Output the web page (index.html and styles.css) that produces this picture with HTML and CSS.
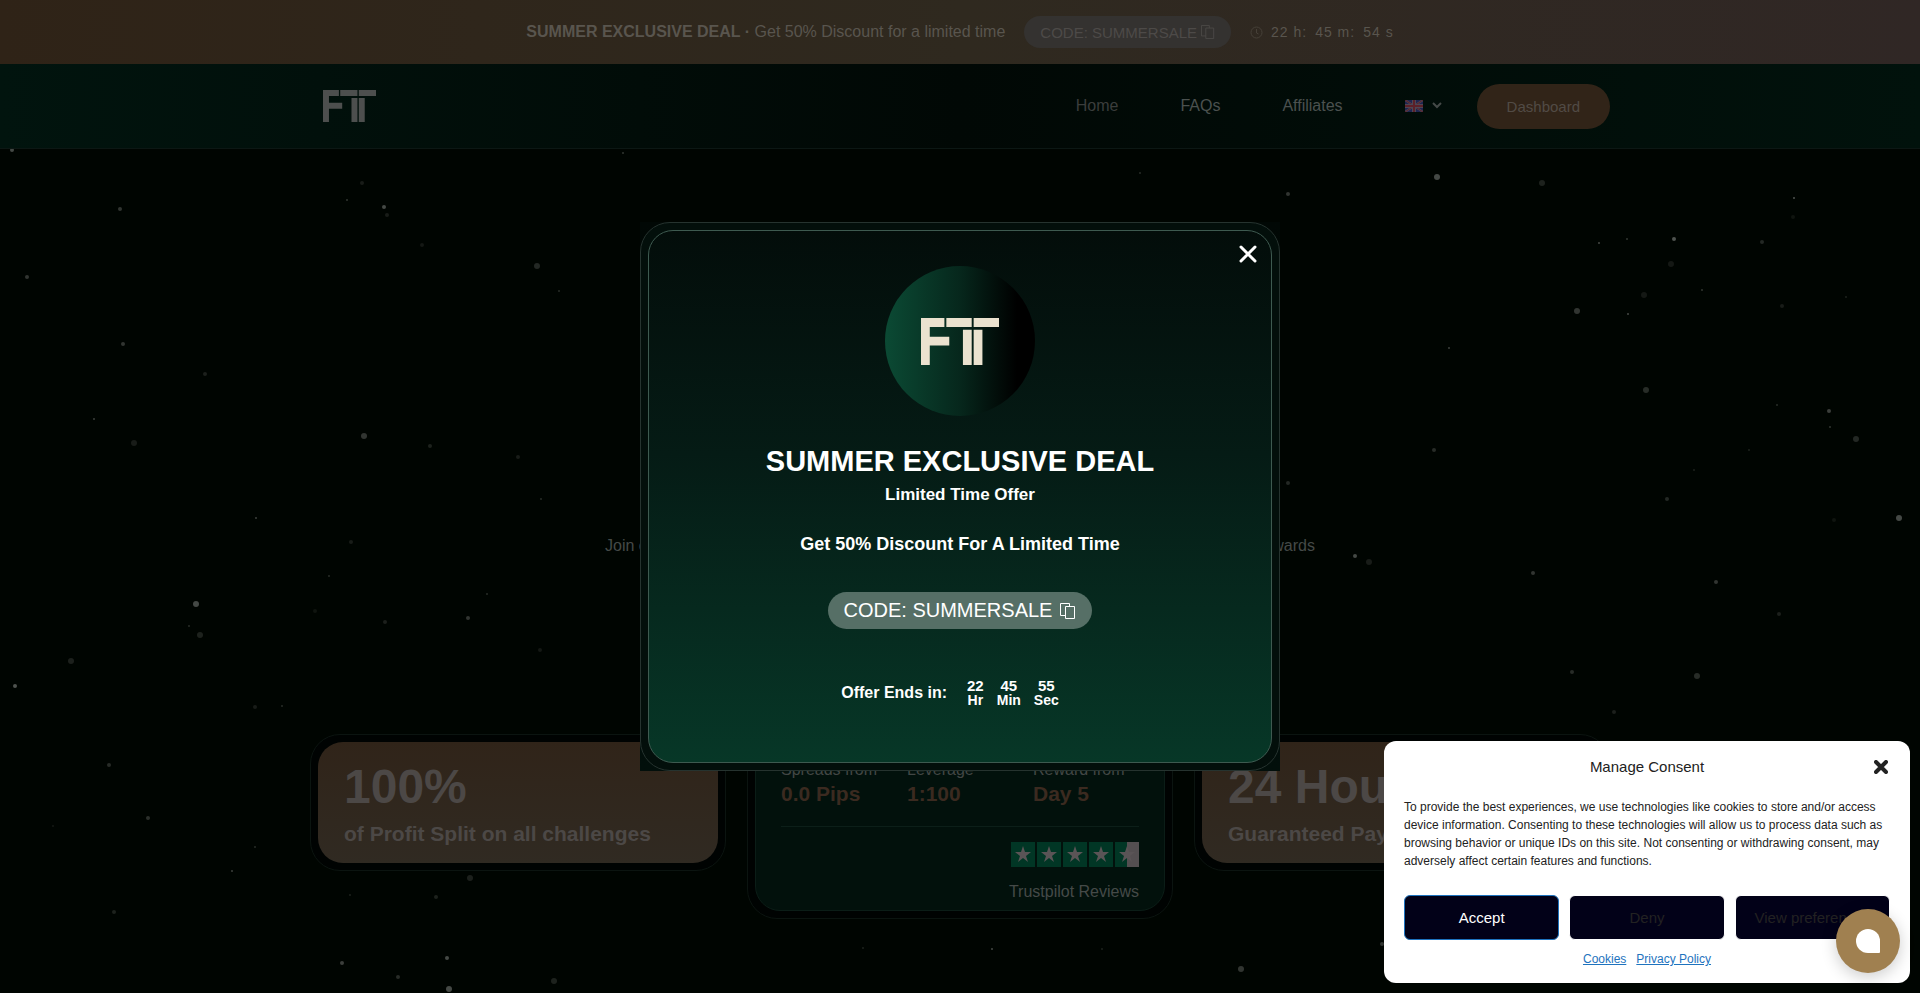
FILE: index.html
```html
<!DOCTYPE html>
<html lang="en">
<head>
  <meta charset="UTF-8">
  <meta name="viewport" content="width=device-width, initial-scale=1.0">
  <title>FTT</title>
  <link rel="stylesheet" href="styles.css">
</head>
<body>
  <!-- shared shapes -->
  <svg class="defs" width="0" height="0" aria-hidden="true">
    <symbol id="logo" viewBox="0 0 80 48">
      <path d="M0 0h24v9H9v10h20v9H9v20H0zM26 0h26v9H26zM43 12h9v36h-9zM54 0h26v9H54zM54 12h9v36h-9z"/>
    </symbol>
    <symbol id="copy" viewBox="0 0 16 16">
      <path d="M5.5 12.500h-5v-12h9v3M5.500 3.500h9v12h-9z" fill="none" stroke="currentColor"/>
    </symbol>
    <symbol id="star" viewBox="0 0 24 25">
      <path d="M12 4l2 6h6l-5 4 2 6-5-4-5 4 2-6-5-4h6z" fill="#5a5456"/>
    </symbol>
  </svg>

  <svg class="stars" id="stars" viewBox="0 0 1920 993" preserveAspectRatio="xMidYMin slice" aria-hidden="true"></svg>

  <div class="promo-bar">
    <p class="promo-text"><strong>SUMMER EXCLUSIVE DEAL ·</strong> Get 50% Discount for a limited time</p>
    <button class="promo-code" type="button">CODE: SUMMERSALE <svg width="14" height="14"><use href="#copy"/></svg></button>
    <div class="promo-timer">
      <svg width="13" height="13" viewBox="0 0 13 13" fill="none" stroke="currentColor"><circle cx="6.500" cy="6.500" r="5.500"/><path d="M6.500 3v4l2 1"/></svg>
      <span>22 h:</span>
      <span>45 m:</span>
      <span>54 s</span>
    </div>
  </div>

  <header class="header">
    <div class="container header-inner">
      <a class="logo" href="#" aria-label="FTT"><svg width="53" height="32"><use href="#logo"/></svg></a>
      <nav class="nav">
        <a class="active" href="#">Home</a>
        <a href="#">FAQs</a>
        <a href="#">Affiliates</a>
        <button class="lang" type="button" aria-label="Language">
          <svg width="18" height="12" viewBox="0 0 18 12">
            <rect width="18" height="12" fill="#1f2450"/>
            <path d="M0 0l18 12M18 0L0 12" stroke="#4d4654" stroke-width="2"/>
            <path d="M0 0l18 12M18 0L0 12" stroke="#5c2029"/>
            <path d="M9 0v12M0 6h18" stroke="#4d4654" stroke-width="4"/>
            <path d="M9 0v12M0 6h18" stroke="#5c2029" stroke-width="2"/>
          </svg>
          <svg width="10" height="8" viewBox="0 0 10 8" fill="none" stroke="currentColor" stroke-width="2"><path d="M1 1l4 4 4-4"/></svg>
        </button>
      </nav>
      <a class="dashboard-btn" href="#">Dashboard</a>
    </div>
  </header>

  <main class="hero">
    <p class="hero-text"><span>Join our community</span> <span>for rewards</span></p>

    <div class="container cards">
      <section class="card">
        <div class="card-inner gold">
          <h2>100%</h2>
          <p>of Profit Split on all challenges</p>
        </div>
      </section>
      <section class="card">
        <div class="card-inner green">
          <dl class="stats">
            <div><dt>Spreads from</dt><dd>0.0 Pips</dd></div>
            <div><dt>Leverage</dt><dd>1:100</dd></div>
            <div><dt>Reward from</dt><dd>Day 5</dd></div>
          </dl>
          <div class="reviews">
            <div class="rating">
              <svg width="24" height="25"><use href="#star"/></svg>
              <svg width="24" height="25"><use href="#star"/></svg>
              <svg width="24" height="25"><use href="#star"/></svg>
              <svg width="24" height="25"><use href="#star"/></svg>
              <svg class="half" width="24" height="25"><use href="#star"/></svg>
            </div>
            <a href="#">Trustpilot Reviews</a>
          </div>
        </div>
      </section>
      <section class="card">
        <div class="card-inner gold">
          <h2>24 Hours</h2>
          <p>Guaranteed Payout</p>
        </div>
      </section>
    </div>
  </main>

  <div class="popup-wrap">
    <div class="popup" role="dialog" aria-labelledby="popup-title">
      <div class="popup-border">
        <div class="popup-inner">
          <button class="popup-close" type="button" aria-label="Close">
            <svg width="18" height="18" viewBox="0 0 18 18" fill="none" stroke="currentColor" stroke-width="3" stroke-linecap="round"><path d="M2 2l14 14M16 2L2 16"/></svg>
          </button>
          <div class="popup-logo"><svg width="78" height="47"><use href="#logo"/></svg></div>
          <h2 id="popup-title">SUMMER EXCLUSIVE DEAL</h2>
          <p class="popup-sub">Limited Time Offer</p>
          <p class="popup-desc">Get 50% Discount For A Limited Time</p>
          <button class="popup-code" type="button">CODE: SUMMERSALE <svg width="16" height="16"><use href="#copy"/></svg></button>
          <div class="countdown">
            <span class="countdown-label">Offer Ends in:</span>
            <div class="unit"><b>22</b><span>Hr</span></div>
            <div class="unit"><b>45</b><span>Min</span></div>
            <div class="unit"><b>55</b><span>Sec</span></div>
          </div>
        </div>
      </div>
    </div>
  </div>

  <div class="consent" role="dialog" aria-labelledby="consent-title">
    <div class="consent-header">
      <div id="consent-title">Manage Consent</div>
      <button class="consent-close" type="button" aria-label="Close">
        <svg width="14" height="14" viewBox="0 0 14 14" fill="none" stroke="currentColor" stroke-width="4" stroke-linecap="round"><path d="M2 2l10 10M12 2L2 12"/></svg>
      </button>
    </div>
    <p class="consent-text">To provide the best experiences, we use technologies like cookies to store and/or access device information. Consenting to these technologies will allow us to process data such as browsing behavior or unique IDs on this site. Not consenting or withdrawing consent, may adversely affect certain features and functions.</p>
    <div class="consent-buttons">
      <button class="accept" type="button">Accept</button>
      <button type="button">Deny</button>
      <button type="button">View preferences</button>
    </div>
    <div class="consent-links">
      <a href="#">Cookies</a>
      <a href="#">Privacy Policy</a>
    </div>
  </div>

  <button class="chat" type="button" aria-label="Open chat"><span class="chat-icon"></span></button>

  <script src="stars.js"></script>
</body>
</html>
```

FILE: styles.css
```css
* {
  box-sizing: border-box;
  margin: 0;
  padding: 0;
}

body {
  min-height: 100vh;
  overflow: hidden;
  background-color: #000501;
  color: #454a48;
  font-family: "Liberation Sans", Arial, sans-serif;
  font-size: 16px;
  line-height: 24px;
}

a {
  color: inherit;
  text-decoration: none;
}

button {
  border: none;
  background: none;
  color: inherit;
  font-family: inherit;
  cursor: pointer;
}

svg {
  display: block;
  flex-shrink: 0;
}

.defs {
  position: absolute;
}

.container {
  width: 100%;
  max-width: 1300px;
  margin: 0 auto;
}

/* star background */
.stars {
  position: absolute;
  top: 0;
  left: 0;
  z-index: -1;
  width: 100%;
  height: 100%;
}

/* promo bar */
.promo-bar {
  display: flex;
  align-items: center;
  justify-content: center;
  height: 64px;
  background: linear-gradient(90deg, #2f2317, #2f291f 50%, #302725);
  color: #59554e;
}

.promo-code {
  display: flex;
  align-items: center;
  gap: 4px;
  height: 32px;
  margin: 0 19px;
  padding: 0 16px;
  border-radius: 16px;
  background-color: #343230;
  color: #4d4a48;
  font-size: 15px;
}

.promo-timer {
  display: flex;
  align-items: center;
  gap: 8px;
  font-size: 14px;
  letter-spacing: 1px;
}

.promo-timer svg {
  color: #464038;
}

/* header */
.header {
  height: 85px;
  border-bottom: 1px solid #0c1714;
  background: linear-gradient(90deg, #01140e, #010805 50%, #01120c);
}

.header-inner {
  display: flex;
  align-items: center;
  height: 84px;
}

.logo {
  margin-left: 13px;
  margin-right: auto;
  fill: #4d4f4e;
}

.nav {
  display: flex;
  align-items: center;
  gap: 62px;
}

.nav a {
  color: #4b514f;
}

.nav .active {
  color: #3b3d3c;
}

.lang {
  display: flex;
  align-items: center;
  gap: 9px;
}

.dashboard-btn {
  margin-left: 35px;
  padding: 0 30px;
  border-radius: 23px;
  background-color: #312418;
  color: #514b45;
  font-size: 15px;
  line-height: 45px;
}

/* hero */
.hero {
  padding-top: 385px;
}

.hero-text {
  display: flex;
  justify-content: space-between;
  max-width: 710px;
  margin: 0 auto 127px;
}

.cards {
  display: grid;
  grid-template-columns: 1fr 426px 1fr;
  align-items: center;
  gap: 21px;
}

.card {
  padding: 7px;
  border: 1px solid #0b1410;
  border-radius: 30px;
  background-color: #000302;
}

.card-inner {
  border-radius: 25px;
}

.gold {
  padding: 21px 26px 17px;
  background: linear-gradient(#302419, #302a22);
  color: #4c4846;
  font-weight: bold;
}

.gold h2 {
  margin-bottom: 11px;
  font-size: 48px;
  line-height: 48px;
}

.gold p {
  font-size: 21px;
}

.green {
  padding: 64px 25px 6px;
  border: 1px solid #0b1d17;
  background-color: #02110c;
}

.stats {
  display: grid;
  grid-template-columns: repeat(3, 1fr);
  gap: 20px;
  padding-bottom: 20px;
  border-bottom: 1px solid #0c1f19;
}

.stats dt {
  color: #424745;
  white-space: nowrap;
}

.stats dd {
  color: #3b2a20;
  font-size: 21px;
  font-weight: bold;
}

.reviews {
  display: flex;
  flex-direction: column;
  align-items: flex-end;
  gap: 13px;
  padding-top: 15px;
}

.rating {
  display: flex;
  gap: 2px;
}

.rating svg {
  background-color: #013625;
}

.rating .half {
  background: linear-gradient(90deg, #013625 50%, #544f51 50%);
}

/* popup */
.popup-wrap {
  position: fixed;
  top: 0;
  right: 0;
  bottom: 0;
  left: 0;
  display: flex;
  align-items: center;
  justify-content: center;
}

.popup {
  width: 100%;
  max-width: 640px;
  background: linear-gradient(#010805, #020f0b);
}

.popup-border {
  padding: 7px;
  border: 1px solid #26332f;
  border-radius: 30px;
  background-color: #030f0b;
}

.popup-inner {
  position: relative;
  display: flex;
  flex-direction: column;
  align-items: center;
  padding: 35px 20px 55px;
  border: 1px solid #3e5a50;
  border-radius: 25px;
  background: linear-gradient(#030d0a, #051b15 42%, #073727);
  color: #fff;
  font-weight: bold;
}

.popup-close {
  position: absolute;
  top: 14px;
  right: 14px;
}

.popup-logo {
  display: flex;
  align-items: center;
  justify-content: center;
  width: 150px;
  height: 150px;
  margin-bottom: 27px;
  border-radius: 50%;
  background: linear-gradient(90deg, #0b4a34, #06271c 50%, #000 88%);
  fill: #ebe2cf;
}

.popup-inner h2 {
  margin-bottom: 4px;
  font-size: 29px;
  line-height: 36px;
}

.popup-sub {
  margin-bottom: 25px;
  font-size: 17px;
}

.popup-desc {
  margin-bottom: 36px;
  font-size: 18px;
}

.popup-code {
  display: flex;
  align-items: center;
  gap: 8px;
  height: 37px;
  margin-bottom: 50px;
  padding: 0 16px;
  border-radius: 19px;
  background-color: #566f66;
  font-size: 20px;
}

.countdown {
  display: flex;
  align-items: center;
  gap: 13px;
  padding-right: 20px;
}

.countdown-label {
  margin-right: 7px;
}

.unit {
  display: flex;
  flex-direction: column;
  align-items: center;
  font-size: 14px;
  line-height: 14px;
}

.unit b {
  font-size: 15px;
}

/* cookie consent */
.consent {
  position: fixed;
  right: 10px;
  bottom: 10px;
  width: 526px;
  max-width: 100%;
  padding: 14px 20px 12px;
  border-radius: 12px;
  background-color: #fff;
  color: #222;
}

.consent-header {
  position: relative;
  margin-bottom: 19px;
  font-size: 15px;
  text-align: center;
}

.consent-close {
  position: absolute;
  top: 5px;
  right: 2px;
}

.consent-text {
  margin-bottom: 25px;
  font-size: 12px;
  line-height: 18px;
}

.consent-buttons {
  display: grid;
  grid-template-columns: repeat(3, 1fr);
  gap: 10px;
  margin-bottom: 7px;
}

.consent-buttons button {
  height: 45px;
  border: 1px solid #fff;
  border-radius: 6px;
  background-color: #020118;
  color: #222;
  font-size: 15px;
  white-space: nowrap;
}

.consent-buttons .accept {
  border-color: #1e73be;
  color: #fff;
}

.consent-links {
  display: flex;
  justify-content: center;
  gap: 10px;
  font-size: 12px;
}

.consent-links a {
  color: #1e73be;
  text-decoration: underline;
}

/* chat bubble */
.chat {
  position: fixed;
  right: 20px;
  bottom: 20px;
  display: flex;
  align-items: center;
  justify-content: center;
  width: 64px;
  height: 64px;
  border-radius: 50%;
  background-color: #a08050;
  box-shadow: 0 4px 16px rgba(0, 0, 0, 0.2);
}

.chat-icon {
  width: 24px;
  height: 24px;
  border-radius: 12px 12px 1px 12px;
  background-color: #fff;
}
```

FILE: stars.js
```js
// x, y, radius, opacity
const stars = [
  [12, 150, 2, 0.35], [120, 209, 2, 0.25], [27, 277, 2, 0.25], [362, 183, 2, 0.12],
  [347, 200, 1, 0.25], [384, 207, 2, 0.35], [387, 215, 2, 0.12], [422, 245, 2, 0.1],
  [537, 266, 3, 0.18], [559, 291, 1, 0.2], [623, 153, 1, 0.25], [123, 344, 2, 0.25],
  [205, 374, 2, 0.14], [94, 419, 1, 0.3], [134, 443, 3, 0.12], [364, 436, 3, 0.25],
  [430, 446, 2, 0.15], [518, 457, 2, 0.12], [541, 499, 1, 0.2], [256, 518, 1, 0.3],
  [351, 542, 2, 0.12], [329, 576, 1, 0.2], [196, 604, 3, 0.35], [189, 626, 1, 0.2],
  [200, 635, 3, 0.15], [315, 611, 2, 0.08], [385, 622, 2, 0.14], [468, 618, 2, 0.25],
  [487, 594, 1, 0.2], [71, 661, 3, 0.14], [15, 686, 2, 0.4], [540, 650, 2, 0.1],
  [255, 707, 2, 0.12], [282, 706, 1, 0.2], [1140, 173, 1, 0.2], [1437, 177, 3, 0.35],
  [1542, 183, 3, 0.15], [1288, 194, 2, 0.25], [1794, 198, 1, 0.4], [1793, 217, 2, 0.08],
  [1599, 243, 1, 0.35], [1627, 239, 1, 0.25], [1674, 239, 2, 0.4], [1671, 264, 3, 0.1],
  [1762, 242, 2, 0.18], [1644, 295, 3, 0.1], [1702, 290, 1, 0.25], [1846, 297, 1, 0.15],
  [1577, 311, 3, 0.25], [1628, 314, 1, 0.35], [1782, 306, 2, 0.12], [1449, 348, 1, 0.3],
  [1646, 390, 3, 0.2], [1777, 405, 1, 0.2], [1829, 411, 2, 0.3], [1830, 427, 1, 0.25],
  [1856, 439, 3, 0.18], [1434, 450, 2, 0.2], [1749, 450, 1, 0.15], [1694, 470, 1, 0.15],
  [1288, 483, 2, 0.18], [1667, 499, 2, 0.18], [1899, 518, 3, 0.35], [1834, 520, 2, 0.08],
  [1355, 556, 2, 0.35], [1369, 562, 3, 0.12], [1533, 573, 2, 0.25], [1716, 582, 2, 0.25],
  [1779, 614, 2, 0.14], [1572, 672, 2, 0.2], [1697, 676, 3, 0.2], [1614, 712, 2, 0.14],
  [109, 765, 2, 0.2], [148, 818, 2, 0.22], [53, 826, 1, 0.1], [255, 847, 1, 0.2],
  [232, 871, 1, 0.3], [470, 878, 3, 0.14], [350, 895, 1, 0.15], [436, 897, 2, 0.15],
  [114, 912, 2, 0.15], [447, 958, 2, 0.35], [342, 963, 2, 0.3], [398, 977, 2, 0.2],
  [449, 989, 3, 0.35], [554, 981, 3, 0.15], [863, 948, 1, 0.15], [992, 949, 1, 0.35],
  [1102, 949, 1, 0.15], [1241, 969, 3, 0.25], [1382, 944, 2, 0.25]
];

const sky = document.getElementById('stars');

stars.forEach(([x, y, r, opacity]) => {
  const dot = document.createElementNS('http://www.w3.org/2000/svg', 'circle');
  dot.setAttribute('cx', x);
  dot.setAttribute('cy', y);
  dot.setAttribute('r', r);
  dot.setAttribute('fill', '#c4c8c5');
  dot.setAttribute('opacity', opacity);
  sky.appendChild(dot);
});
```
